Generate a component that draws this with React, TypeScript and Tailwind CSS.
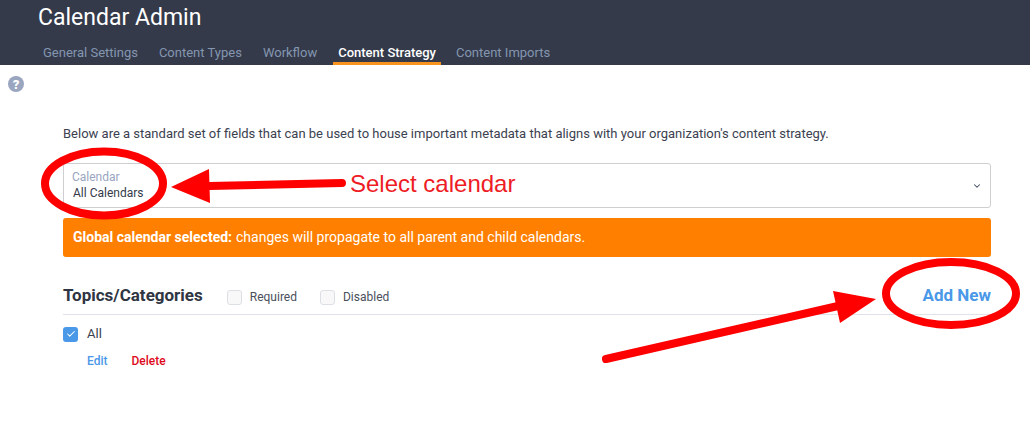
import { Check, ChevronDown } from "lucide-react";

const TABS = ["General Settings", "Content Types", "Workflow", "Content Strategy", "Content Imports"];

function Box({ label }: { label: string }) {
  return (
    <label className="flex items-center gap-[8px] text-[12px] text-[#4a4f5c]">
      <span className="w-[15px] h-[15px] rounded-[3px] border border-[#dcdfe4] bg-[#f8f8f9]" />
      {label}
    </label>
  );
}

export default function App() {
  return (
    <div className="relative w-[1030px] h-[427px] overflow-hidden bg-white font-['Roboto',sans-serif]">
      <header className="h-[65px] bg-[#343a4a] pl-[38px] flex flex-col">
        <h1 className="text-[23px] leading-[26px] text-white mt-[5px]">Calendar Admin</h1>
        <nav className="flex mt-auto">
          {TABS.map((tab) =>
            tab === "Content Strategy" ? (
              <a key={tab} className="px-[5px] h-[27px] pt-[7px] mr-[10px] text-[13px] leading-[15px] font-medium text-white border-b-[3px] border-[#f7931e]">
                {tab}
              </a>
            ) : (
              <a key={tab} className="px-[5px] h-[27px] pt-[7px] mr-[11px] text-[13px] leading-[15px] text-[#8496b0]">
                {tab}
              </a>
            )
          )}
        </nav>
      </header>

      <div className="pl-[8px] pt-[11px]">
        <span className="flex w-[16px] h-[16px] items-center justify-center rounded-full bg-[#9aa5c0] text-white text-[13px] leading-none font-black">?</span>
      </div>

      <main className="pl-[63px] pr-[39px] pt-[34px]">
        <p className="text-[13px] leading-[16px] text-[#3b4150]">
          Below are a standard set of fields that can be used to house important metadata that aligns with your organization's content strategy.
        </p>

        <div className="mt-[21px] h-[45px] rounded-[3px] border border-[#cfcfd2] flex items-center justify-between pl-[8px] pr-[8px]">
          <div>
            <div className="text-[12px] leading-[15px] text-[#9aa5c0]">Calendar</div>
            <div className="text-[12px] leading-[15px] mt-[1px] pl-[1px] text-[#343a4a]">All Calendars</div>
          </div>
          <ChevronDown className="w-[10px] h-[10px] text-[#3b4a60]" strokeWidth={2.5} />
        </div>

        <div className="mt-[10px] h-[39px] rounded-[3px] bg-[#ff7f00] flex items-center pl-[10px] text-[14px] text-white">
          <strong className="font-bold mr-[4px]">Global calendar selected:</strong> changes will propagate to all parent and child calendars.
        </div>

        <div className="mt-[22px] h-[36px] border-b border-[#dfe2e8] flex items-start">
          <h2 className="text-[17px] leading-[19px] font-bold text-[#2f3542] mr-[24px] mt-[7px]">Topics/Categories</h2>
          <div className="flex gap-[23px] mt-[9px]">
            <Box label="Required" />
            <Box label="Disabled" />
          </div>
          <a className="ml-auto mt-[7px] text-[17px] leading-[19px] font-bold text-[#4a98e8]">Add New</a>
        </div>

        <label className="mt-[11px] flex items-center gap-[9px] text-[13px] leading-[16px] text-[#3b4150]">
          <span className="flex items-center justify-center w-[15px] h-[15px] rounded-[3px] bg-[#4a98e8]">
            <Check className="w-[10px] h-[10px] text-white" strokeWidth={2.5} />
          </span>
          All
        </label>

        <div className="mt-[12px] pl-[24px] flex gap-[24px] text-[12px] leading-[15px] font-medium">
          <a className="text-[#4a98e8]">Edit</a>
          <a className="text-[#dd0a1b]">Delete</a>
        </div>
      </main>

      {/* red annotations drawn over the screenshot */}
      <svg className="absolute inset-0 pointer-events-none" width="1030" height="427" viewBox="0 0 1030 427" fill="none">
        <ellipse cx="104" cy="183.5" rx="59" ry="32" stroke="#ff0000" strokeWidth="8" />
        <ellipse cx="951" cy="293.5" rx="65" ry="31.5" stroke="#ff0000" strokeWidth="8" />
        <path d="M171 187 L209 169 L210 203 Z" fill="#ff0000" />
        <path d="M209 186 L342 183" stroke="#ff0000" strokeWidth="8" strokeLinecap="round" />
        <path d="M876 299 L833 291 L840 323 Z" fill="#ff0000" />
        <path d="M606 359 L838 306" stroke="#ff0000" strokeWidth="8" strokeLinecap="round" />
      </svg>
      <span className="absolute left-[350px] top-[170px] text-[24px] leading-[28px] text-[#ee1c25] font-['Liberation_Sans',sans-serif]">
        Select calendar
      </span>
    </div>
  );
}
